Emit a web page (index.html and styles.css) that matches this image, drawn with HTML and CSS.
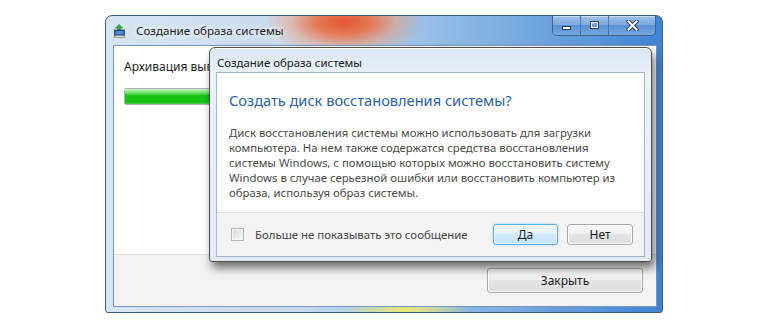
FILE: index.html
```html
<!DOCTYPE html>
<html lang="ru">
<head>
    <meta charset="UTF-8">
    <title>Создание образа системы</title>
    <link rel="stylesheet" href="styles.css">
</head>
<body>

<div class="desk">
    <div class="win">
        <div class="win-title">
            <svg class="win-icon" width="14" height="14" viewBox="0 0 14 14">
                <path d="M6 0.5 L9.5 4 L7.3 4 L7.3 6 L4.7 6 L4.7 4 L2.5 4 Z" fill="#2fae3a" stroke="#1d7a27" stroke-width="0.6"/>
                <rect x="1.5" y="6" width="10" height="5.5" fill="#1c4a86" stroke="#0f2f5c" stroke-width="0.6"/>
                <rect x="2.6" y="7" width="7.8" height="3.4" fill="#4f8fd3"/>
                <path d="M0.5 13.5 L3 11.5 L10 11.5 L12.5 13.5 Z" fill="#d9d9d9" stroke="#7d7d7d" stroke-width="0.6"/>
            </svg>
            <span class="win-caption">Создание образа системы</span>
            <div class="caption-btns">
                <span class="cap-btn cap-min">
                    <svg width="11" height="9" viewBox="0 0 11 9"><rect x="1.5" y="5.5" width="8" height="3" fill="#fff" stroke="#283f5c"/></svg>
                </span>
                <span class="cap-btn cap-max">
                    <svg width="11" height="9" viewBox="0 0 11 9"><rect x="1.5" y="0.5" width="8" height="7" fill="none" stroke="#283f5c" stroke-width="1"/><rect x="2.5" y="1.5" width="6" height="5" fill="none" stroke="#fff" stroke-width="1"/><rect x="3" y="3" width="5" height="3" fill="#6f9fd6"/></svg>
                </span>
                <span class="cap-btn cap-close">
                    <svg width="13" height="11" viewBox="0 0 13 11">
                        <path d="M2.5 1.5 L10.5 9.5 M10.5 1.5 L2.5 9.5" stroke="#283f5c" stroke-width="4" stroke-linecap="square"/>
                        <path d="M2.5 1.5 L10.5 9.5 M10.5 1.5 L2.5 9.5" stroke="#fff" stroke-width="2" stroke-linecap="square"/>
                    </svg>
                </span>
            </div>
        </div>

        <div class="win-client">
            <div class="win-body">
                <p class="status">Архивация выполняется...</p>
                <div class="progress"><div class="progress-fill" style="width: 40%"></div></div>
            </div>
            <div class="win-footer">
                <button class="btn btn-close">Закрыть</button>
            </div>
        </div>

        <div class="dialog">
            <div class="dialog-title">Создание образа системы</div>
            <div class="dialog-client">
                <div class="dialog-body">
                    <h2 class="instruction">Создать диск восстановления системы?</h2>
                    <p class="content">
                        Диск восстановления системы можно использовать для загрузки<br>
                        компьютера. На нем также содержатся средства восстановления<br>
                        системы Windows, с помощью которых можно восстановить систему<br>
                        Windows в случае серьезной ошибки или восстановить компьютер из<br>
                        образа, используя образ системы.
                    </p>
                </div>
                <div class="dialog-footer">
                    <label class="check"><span class="check-box"></span>Больше не показывать это сообщение</label>
                    <div class="dialog-btns">
                        <button class="btn btn-default">Да</button>
                        <button class="btn btn-no">Нет</button>
                    </div>
                </div>
            </div>
        </div>
    </div>
</div>

</body>
</html>
```

FILE: styles.css
```css
* {
    box-sizing: border-box;
    margin: 0;
    padding: 0;
    font-family: "Noto Sans", "DejaVu Sans", sans-serif;
}

body {
    background-color: #fff;
}

.desk {
    padding: 15px 0 0 105px;
}

/* main window */
.win {
    position: relative;
    display: flex;
    flex-direction: column;
    width: 558px;
    height: 298px;
    padding: 0 5px 5px 7px;
    border: 1px solid #3d5f86;
    border-radius: 7px 7px 3px 3px;
    background:
        radial-gradient(ellipse 80px 36px at 238px 6px, rgba(226, 86, 50, 1), rgba(234, 112, 72, 0.9) 35%, rgba(240, 150, 110, 0.5) 65%, rgba(236, 170, 140, 0) 100%),
        radial-gradient(ellipse 65px 10px at 300px 294px, rgba(240, 236, 110, 1), rgba(220, 240, 150, 0) 100%),
        linear-gradient(to right, #d6e4f2 0%, #c6dbef 35%, #7fb0e2 70%, #3f83d3 100%);
}

.win-title {
    display: flex;
    align-items: center;
    height: 29px;
}

.win-icon {
    flex-shrink: 0;
}

.win-caption {
    margin-left: 9px;
    font-size: 11.6px;
    color: #1a1a1a;
    text-shadow: 0 0 6px #fff, 0 0 10px #fff;
}

.caption-btns {
    display: flex;
    align-self: flex-start;
    margin-left: auto;
    margin-right: 1px;
    height: 20px;
    border: 1px solid #3f628f;
    border-top: none;
    border-radius: 0 0 5px 5px;
    overflow: hidden;
}

.cap-btn {
    display: flex;
    align-items: center;
    justify-content: center;
    width: 28px;
    background: linear-gradient(#9dc1ea, #7aa9de 50%, #5a92d4 50%, #74a6dd);
    border-right: 1px solid #4f76a6;
    box-shadow: inset 0 1px 0 rgba(255, 255, 255, 0.45);
}

.cap-close {
    width: 46px;
    border-right: none;
}

.win-client {
    display: flex;
    flex-direction: column;
    flex: 1;
    background-color: #fff;
    border: 1px solid #7b96b8;
}

.win-body {
    flex: 1;
    padding: 13px 10px 0 10px;
}

.status {
    font-size: 12px;
    line-height: 15px;
    color: #1e1e1e;
}

.progress {
    height: 17px;
    margin-top: 14px;
    border: 1px solid #b2b2b2;
    border-radius: 2px;
    background: linear-gradient(#f3f3f3, #e2e2e2);
}

.progress-fill {
    height: 100%;
    background: linear-gradient(#c9f5c9, #6ee46e 25%, #16c516 45%, #12bf12 80%, #3fd23f);
}

.win-footer {
    display: flex;
    align-items: center;
    justify-content: flex-end;
    height: 52px;
    padding-right: 13px;
    background-color: #f3f3f3;
    border-top: 1px solid #e0e0e0;
}

/* buttons */
.btn {
    height: 21px;
    font-size: 12px;
    color: #1e1e1e;
    border: 1px solid #a9a9a9;
    border-radius: 3px;
    background: linear-gradient(#f8f8f8, #efefef 50%, #e4e4e4 50%, #dedede);
    box-shadow: inset 0 0 0 1px rgba(255, 255, 255, 0.8);
}

.btn-close {
    width: 156px;
    height: 25px;
}

.btn-default {
    width: 65px;
    border-color: #5aaede;
    background: linear-gradient(#eef7fd, #e0f1fc 50%, #d0e9f9 50%, #c6e4f7);
    box-shadow: inset 0 0 0 1px rgba(255, 255, 255, 0.7), 0 0 2px rgba(90, 174, 222, 0.6);
}

.btn-no {
    width: 66px;
}

/* dialog over the window */
.dialog {
    position: absolute;
    left: 103px;
    top: 31px;
    display: flex;
    flex-direction: column;
    width: 443px;
    height: 215px;
    padding: 0 6px 4px 6px;
    border: 1px solid #4e4e4e;
    border-radius: 6px 6px 3px 3px;
    background: linear-gradient(#dae6f3, #eaf1f9 26px, #e2ebf5);
    box-shadow: inset 0 1px 0 rgba(255, 255, 255, 0.9), 3px 6px 10px rgba(0, 0, 0, 0.55);
}

.dialog-title {
    display: flex;
    align-items: center;
    height: 24px;
    padding: 4px 0 0 1px;
    font-size: 11.4px;
    color: #1a1a1a;
}

.dialog-client {
    display: flex;
    flex-direction: column;
    flex: 1;
    background-color: #fff;
    border: 1px solid #a4b5c9;
}

.dialog-body {
    flex: 1;
    padding: 17px 12px 0 12px;
}

.instruction {
    font-size: 14.6px;
    font-weight: normal;
    line-height: 20px;
    color: #2a62ab;
}

.content {
    margin-top: 15px;
    font-size: 11.35px;
    line-height: 15px;
    color: #4a4a4a;
    white-space: nowrap;
}

.dialog-footer {
    display: flex;
    align-items: center;
    height: 44px;
    padding: 0 11px 0 14px;
    background-color: #f3f3f3;
    border-top: 1px solid #e0e0e0;
}

.check {
    display: flex;
    align-items: center;
    font-size: 11.4px;
    color: #444;
}

.check-box {
    width: 13px;
    height: 13px;
    margin-right: 11px;
    border: 1px solid #b4b4b4;
    background: linear-gradient(135deg, #dadada, #f9f9f9);
    box-shadow: inset 0 0 0 1px #f4f4f4;
}

.dialog-btns {
    display: flex;
    gap: 9px;
    margin-left: auto;
}
```
